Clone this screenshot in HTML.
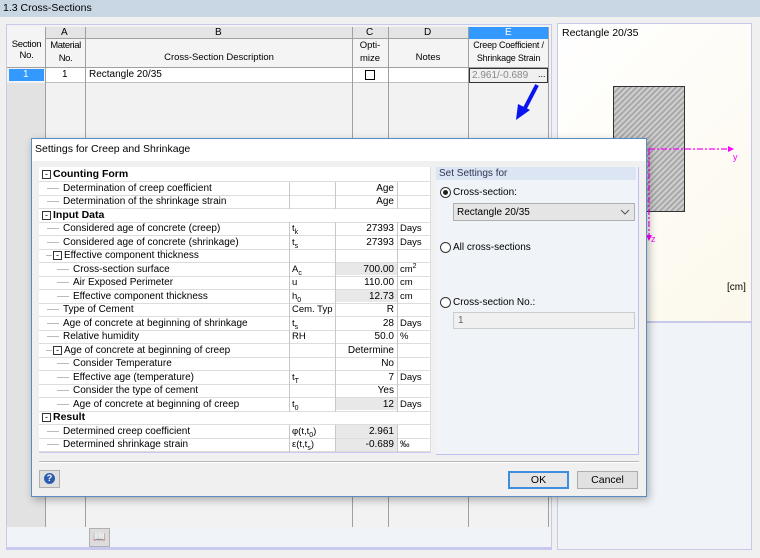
<!DOCTYPE html>
<html><head><meta charset="utf-8"><style>
*{box-sizing:border-box;margin:0;padding:0}
body{width:760px;height:558px;overflow:hidden;background:#f0f0f0;font-family:"Liberation Sans",sans-serif;font-size:10px;color:#000;position:relative}
.a{position:absolute}
.t{position:absolute;white-space:nowrap;font-size:10px;line-height:13px}
.vl{position:absolute;width:1px;background:#a0a0a0}
.hl{position:absolute;height:1px;background:#c8c8c8}
sub,sup{font-size:7px;line-height:0}
</style></head><body>
<!-- title -->
<div class="a" style="left:0;top:0;width:760px;height:17px;background:#c9d7e5"></div>
<div class="t" style="left:3px;top:2px;font-size:10.5px">1.3 Cross-Sections</div>

<!-- main table panel -->
<div class="a" style="left:6px;top:24px;width:546px;height:526px;background:#f2f2f2;border:1px solid #c8c8e8"></div>
<div class="a" style="left:7px;top:83px;width:38px;height:444px;background:#e2e2e2"></div>
<div class="a" style="left:7px;top:527px;width:544px;height:22px;background:#f0f4f8;border-bottom:2px solid #c8c8f0"></div>
<div class="a" style="left:89px;top:528px;width:21px;height:19px;background:#dcdcdc;border:1px solid #b0b0b0"></div>
<div class="t" style="left:93px;top:531px;font-size:10px">📖</div>
<!-- header -->
<div class="a" style="left:45px;top:27px;width:503px;height:12px;background:#e4e4e4;border-bottom:1px solid #a0a0a0"></div>
<div class="a" style="left:469px;top:27px;width:79px;height:12px;background:#3399ff"></div>
<div class="a" style="left:7px;top:39px;width:541px;height:29px;background:#f4f4f4;border-bottom:1px solid #a0a0a0"></div>
<div class="a" style="left:7px;top:27px;width:38px;height:12px;background:#f4f4f4"></div>
<div class="t" style="left:61px;top:26px">A</div><div class="t" style="left:215px;top:26px">B</div>
<div class="t" style="left:366px;top:26px">C</div><div class="t" style="left:424px;top:26px">D</div>
<div class="t" style="left:505px;top:26px;color:#fff">E</div>
<div class="t" style="left:9px;top:39px;line-height:11px;text-align:center;width:35px;font-size:9.5px;letter-spacing:-.3px">Section<br>No.</div>
<div class="t" style="left:46px;top:39px;line-height:13px;text-align:center;width:39px;font-size:9.5px;letter-spacing:-.4px">Material<br>No.</div>
<div class="t" style="left:86px;top:51px;width:266px;text-align:center;font-size:9.5px">Cross-Section Description</div>
<div class="t" style="left:352px;top:39px;line-height:13px;text-align:center;width:36px;font-size:9.5px">Opti-<br>mize</div>
<div class="t" style="left:388px;top:51px;width:80px;text-align:center;font-size:9.5px">Notes</div>
<div class="t" style="left:469px;top:39px;line-height:13px;text-align:center;width:79px;font-size:9px;letter-spacing:-.2px">Creep Coefficient /<br>Shrinkage Strain</div>
<!-- data row -->
<div class="a" style="left:45px;top:68px;width:503px;height:15px;background:#fff;border-bottom:1px solid #c0c0c0"></div>
<div class="a" style="left:9px;top:69px;width:35px;height:12px;background:#3399ff"></div>
<div class="t" style="left:23px;top:68px;color:#fff">1</div>
<div class="t" style="left:62px;top:68px">1</div>
<div class="t" style="left:89px;top:68px">Rectangle 20/35</div>
<div class="a" style="left:365px;top:70px;width:10px;height:10px;border:1.5px solid #000;background:#fff"></div>
<div class="a" style="left:469px;top:68px;width:79px;height:15px;border:1px solid #333;background:#f0f0f0"></div>
<div class="t" style="left:472px;top:69px;color:#888">2.961/-0.689</div>
<div class="t" style="left:538px;top:68px;font-size:9px">...</div>
<div class="vl" style="left:45px;top:27px;height:500px"></div>
<div class="vl" style="left:85px;top:27px;height:500px"></div>
<div class="vl" style="left:352px;top:27px;height:500px"></div>
<div class="vl" style="left:388px;top:27px;height:500px"></div>
<div class="vl" style="left:468px;top:27px;height:500px"></div>
<div class="vl" style="left:548px;top:27px;height:500px"></div>
<!-- arrow -->
<svg class="a" style="left:510px;top:80px" width="35" height="45"><line x1="27" y1="5" x2="13" y2="32" stroke="#0a14f0" stroke-width="4"/><polygon points="6,40 8,24 20,30" fill="#0a14f0"/></svg>

<!-- preview panel -->
<div class="a" style="left:557px;top:23px;width:195px;height:299px;background:linear-gradient(135deg,#fff 0%,#fcf8ec 100%);border:1px solid #c8c8e8"></div>
<div class="a" style="left:557px;top:322px;width:195px;height:228px;background:#f0f4f8;border:1px solid #c8c8e8"></div>
<div class="t" style="left:562px;top:27px;font-size:10.5px">Rectangle 20/35</div>
<svg class="a" style="left:600px;top:80px" width="150" height="170">
<defs><pattern id="h" width="4" height="4" patternUnits="userSpaceOnUse" patternTransform="rotate(45)"><rect width="4" height="4" fill="#a8a8a8"/><rect width="2" height="4" fill="#d0d0d0"/></pattern></defs>
<rect x="13.5" y="6.5" width="71" height="125" fill="url(#h)" stroke="#333"/>
<line x1="49" y1="69" x2="128" y2="69" stroke="#f0f" stroke-width="1.2" stroke-dasharray="6,2,2,2"/>
<polygon points="128,66 134,69 128,72" fill="#f0f"/>
<line x1="49" y1="69" x2="49" y2="155" stroke="#f0f" stroke-width="1.2" stroke-dasharray="6,2,2,2"/>
<polygon points="46,155 49,161 52,155" fill="#f0f"/>
<text x="133" y="80" font-size="9" fill="#f0f" font-family="Liberation Sans">y</text>
<text x="51" y="162" font-size="9" fill="#f0f" font-family="Liberation Sans">z</text>
</svg>
<div class="t" style="left:727px;top:281px;font-size:10px">[cm]</div>

<!-- dialog -->
<div class="a" style="left:31px;top:138px;width:616px;height:359px;background:#f0f0f0;border:1px solid #5a8cc0;box-shadow:2px 3px 8px rgba(0,0,0,.3)"></div>
<div class="a" style="left:32px;top:139px;width:614px;height:22px;background:#fff"></div>
<div class="t" style="left:35px;top:143px;font-size:10.5px">Settings for Creep and Shrinkage</div>
<!-- tree -->
<div class="a" style="left:39px;top:167px;width:392px;height:286px;background:#fff;border-bottom:1px solid #c8c8f0;border-right:1px solid #ddd"></div>
<div class="a" style="left:335px;top:262px;width:62px;height:13px;background:#e8e8e8"></div>
<div class="a" style="left:335px;top:289px;width:62px;height:13px;background:#e8e8e8"></div>
<div class="a" style="left:335px;top:397px;width:62px;height:13px;background:#e8e8e8"></div>
<div class="a" style="left:335px;top:424px;width:62px;height:27px;background:#e8e8e8"></div>
<div id="tree"></div>
<!-- group -->
<div class="a" style="left:436px;top:167px;width:203px;height:288px;background:#f0f4f9;border-right:1px solid #c0c0ee;border-bottom:1px solid #c0c0ee"></div>
<div class="a" style="left:436px;top:167px;width:200px;height:13px;background:#dbe5f3"></div>
<div class="t" style="left:439px;top:167px;color:#335">Set Settings for</div>
<div class="a" style="left:440px;top:187px;width:11px;height:11px;border:1px solid #333;border-radius:50%;background:#fff"></div>
<div class="a" style="left:443px;top:190px;width:5px;height:5px;border-radius:50%;background:#222"></div>
<div class="t" style="left:453px;top:186px">Cross-section:</div>
<div class="a" style="left:453px;top:203px;width:182px;height:18px;background:#e5e5e5;border:1px solid #b0b0b0"></div>
<div class="t" style="left:457px;top:206px">Rectangle 20/35</div>
<svg class="a" style="left:620px;top:208px" width="10" height="8"><path d="M1 2 L5 6 L9 2" fill="none" stroke="#555"/></svg>
<div class="a" style="left:440px;top:242px;width:11px;height:11px;border:1px solid #333;border-radius:50%;background:#fff"></div>
<div class="t" style="left:453px;top:241px">All cross-sections</div>
<div class="a" style="left:440px;top:297px;width:11px;height:11px;border:1px solid #333;border-radius:50%;background:#fff"></div>
<div class="t" style="left:453px;top:296px">Cross-section No.:</div>
<div class="a" style="left:453px;top:312px;width:182px;height:17px;background:#f0f0f0;border:1px solid #ccc"></div>
<div class="t" style="left:458px;top:314px;color:#666">1</div>
<!-- bottom -->
<div class="a" style="left:39px;top:461px;width:600px;height:2px;border-top:1px solid #b8b8b8;border-bottom:1px solid #fff"></div>
<div class="a" style="left:39px;top:470px;width:21px;height:18px;background:#e0e0e0;border:1px solid #b0b0b0"></div>
<div class="a" style="left:44px;top:473px;width:11px;height:11px;border-radius:50%;background:#2a5db0;color:#fff;font-size:9px;line-height:11px;text-align:center;font-weight:bold">?</div>
<div class="a" style="left:508px;top:471px;width:61px;height:18px;background:#e5e5e5;border:2px solid #3c8ede;text-align:center;line-height:14px;font-size:10.5px">OK</div>
<div class="a" style="left:577px;top:471px;width:61px;height:18px;background:#e1e1e1;border:1px solid #adadad;text-align:center;line-height:16px;font-size:10.5px">Cancel</div>
<script>
var rows=[
[0,"Counting Form","","",""],
[1,"Determination of creep coefficient","","Age",""],
[1,"Determination of the shrinkage strain","","Age",""],
[0,"Input Data","","",""],
[1,"Considered age of concrete (creep)","t<sub>k</sub>","27393","Days"],
[1,"Considered age of concrete (shrinkage)","t<sub>s</sub>","27393","Days"],
[2,"Effective component thickness","","",""],
[3,"Cross-section surface","A<sub>c</sub>","700.00","cm<sup>2</sup>"],
[3,"Air Exposed Perimeter","u","110.00","cm"],
[3,"Effective component thickness","h<sub>0</sub>","12.73","cm"],
[1,"Type of Cement","Cem. Typ","R",""],
[1,"Age of concrete at beginning of shrinkage","t<sub>s</sub>","28","Days"],
[1,"Relative humidity","RH","50.0","%"],
[2,"Age of concrete at beginning of creep","","Determine",""],
[3,"Consider Temperature","","No",""],
[3,"Effective age (temperature)","t<sub>T</sub>","7","Days"],
[3,"Consider the type of cement","","Yes",""],
[3,"Age of concrete at beginning of creep","t<sub>0</sub>","12","Days"],
[0,"Result","","",""],
[1,"Determined creep coefficient","φ(t,t<sub>0</sub>)","2.961",""],
[1,"Determined shrinkage strain","ε(t,t<sub>s</sub>)","-0.689","‰"]];
var h="";
rows.forEach(function(r,i){var y=168+i*13.5;
h+='<div class="hl" style="left:39px;width:391px;top:'+(y+13)+'px;background:#ddd"></div>';
if(r[0]==0){h+='<div class="a" style="left:42px;top:'+(y+2)+'px;width:9px;height:9px;border:1px solid #333;font-size:9px;line-height:6px;text-align:center">-</div><div class="t" style="left:53px;top:'+y+'px;font-weight:bold;font-size:10.5px">'+r[1]+'</div>';}
else if(r[0]==2){h+='<div class="hl" style="left:46px;width:6px;top:'+(y+6)+'px;background:#bbb"></div><div class="a" style="left:53px;top:'+(y+2)+'px;width:9px;height:9px;border:1px solid #333;font-size:9px;line-height:6px;text-align:center">-</div><div class="t" style="left:64px;top:'+y+'px">'+r[1]+'</div>';}
else{var x=r[0]==1?63:73;h+='<div class="hl" style="left:'+(x-16)+'px;width:12px;top:'+(y+6)+'px;background:#bbb"></div><div class="t" style="left:'+x+'px;top:'+y+'px">'+r[1]+'</div>';
}
if(r[0]!=0){h+='<div class="vl" style="left:289px;top:'+y+'px;height:14px;background:#c8c8c8"></div><div class="vl" style="left:335px;top:'+y+'px;height:14px;background:#c8c8c8"></div><div class="vl" style="left:397px;top:'+y+'px;height:14px;background:#c8c8c8"></div>';}
h+='<div class="t" style="left:292px;top:'+y+'px;font-size:9.5px">'+r[2]+'</div><div class="t" style="left:335px;width:59px;text-align:right;top:'+y+'px">'+r[3]+'</div><div class="t" style="left:400px;top:'+y+'px;font-size:9.5px">'+r[4]+'</div>';
});
document.getElementById("tree").innerHTML=h;
</script>
</body></html>
